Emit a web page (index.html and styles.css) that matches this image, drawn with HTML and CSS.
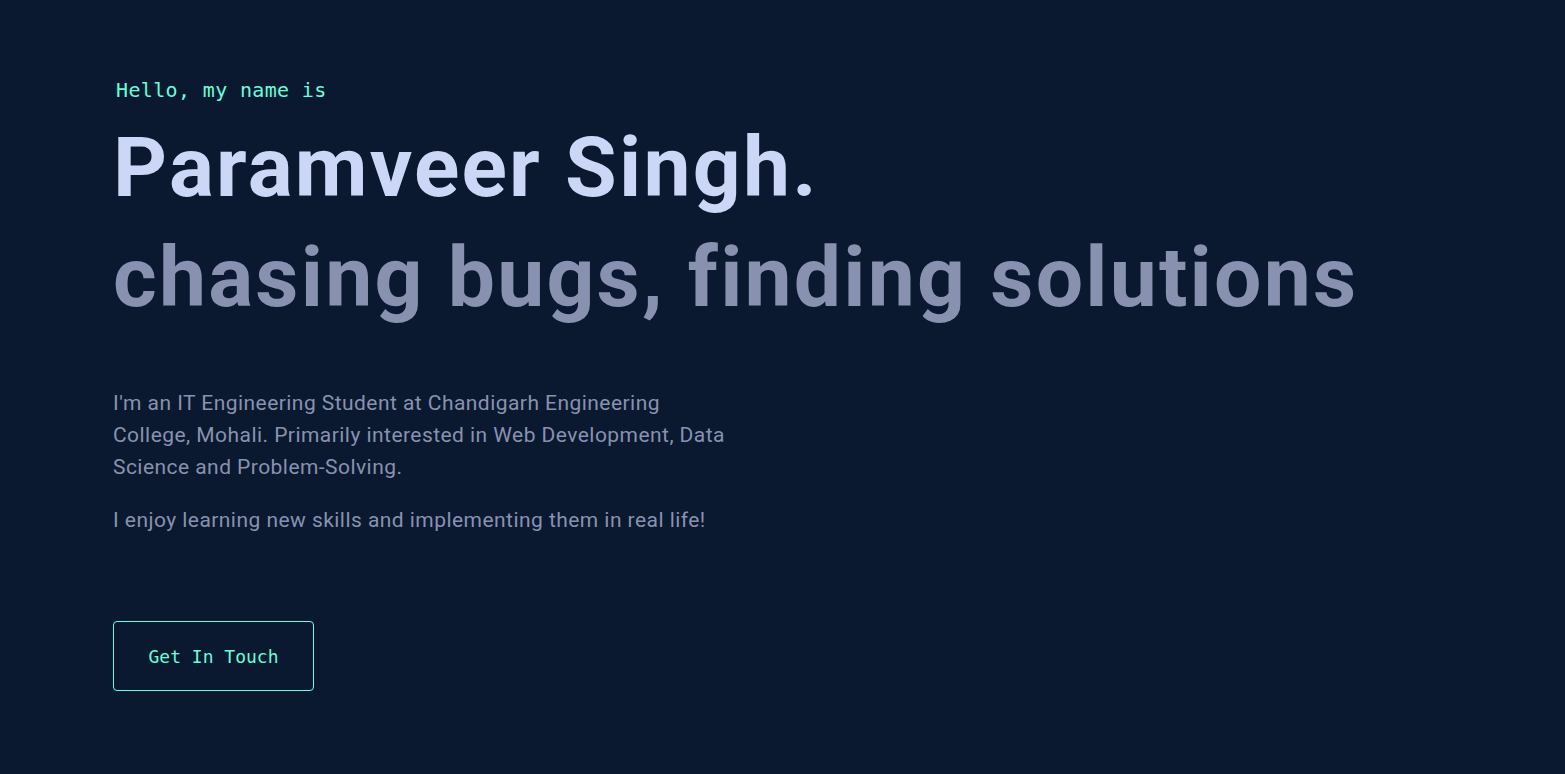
FILE: index.html
```html
<!DOCTYPE html>
<html lang="en">
<head>
<meta charset="utf-8">
<title>Paramveer Singh</title>
<link rel="stylesheet" href="styles.css">
</head>
<body>
<main class="hero">
  <h1 class="hello">Hello, my name is</h1>
  <h2 class="name">Paramveer Singh.</h2>
  <h3 class="tagline">chasing bugs, finding solutions</h3>
  <div class="about">
    <p>I'm an IT Engineering Student at Chandigarh Engineering College, Mohali. Primarily interested in Web Development, Data Science and Problem-Solving.</p>
    <p>I enjoy learning new skills and implementing them in real life!</p>
  </div>
  <a class="cta" href="#contact">Get In Touch</a>
</main>
</body>
</html>
```
FILE: styles.css
```css
html, body {
  margin: 0;
  padding: 0;
  background: #0a192f;
  height: 100%;
}
body {
  font-family: Roboto, "Liberation Sans", sans-serif;
  overflow: hidden;
}
.hero {
  display: flex;
  flex-direction: column;
  align-items: flex-start;
  padding: 78px 113px 0;
}
.hello {
  margin: 0 0 11px 3px;
  font-family: "DejaVu Sans Mono", monospace;
  font-weight: 400;
  font-size: 20px;
  line-height: 24px;
  letter-spacing: 0.35px;
  color: #64ffda;
}
.name, .tagline {
  margin: 0;
  font-size: 84px;
  line-height: 110px;
  font-weight: 700;
  letter-spacing: 2.2px;
}
.name { color: #ccd6f6; }
.tagline { color: #8892b0; }
.about {
  margin-top: 54px;
  max-width: 628px;
}
.about p {
  margin: 0 0 21px;
  font-size: 21px;
  line-height: 32px;
  letter-spacing: 0.45px;
  color: #8892b0;
}
.about p:last-child { margin-bottom: 0; }
.cta {
  margin-top: 85px;
  box-sizing: border-box;
  width: 201px;
  height: 70px;
  display: flex;
  align-items: center;
  justify-content: center;
  border: 1px solid #64ffda;
  border-radius: 4px;
  font-family: "DejaVu Sans Mono", monospace;
  font-size: 18px;
  color: #64ffda;
  text-decoration: none;
}
```
